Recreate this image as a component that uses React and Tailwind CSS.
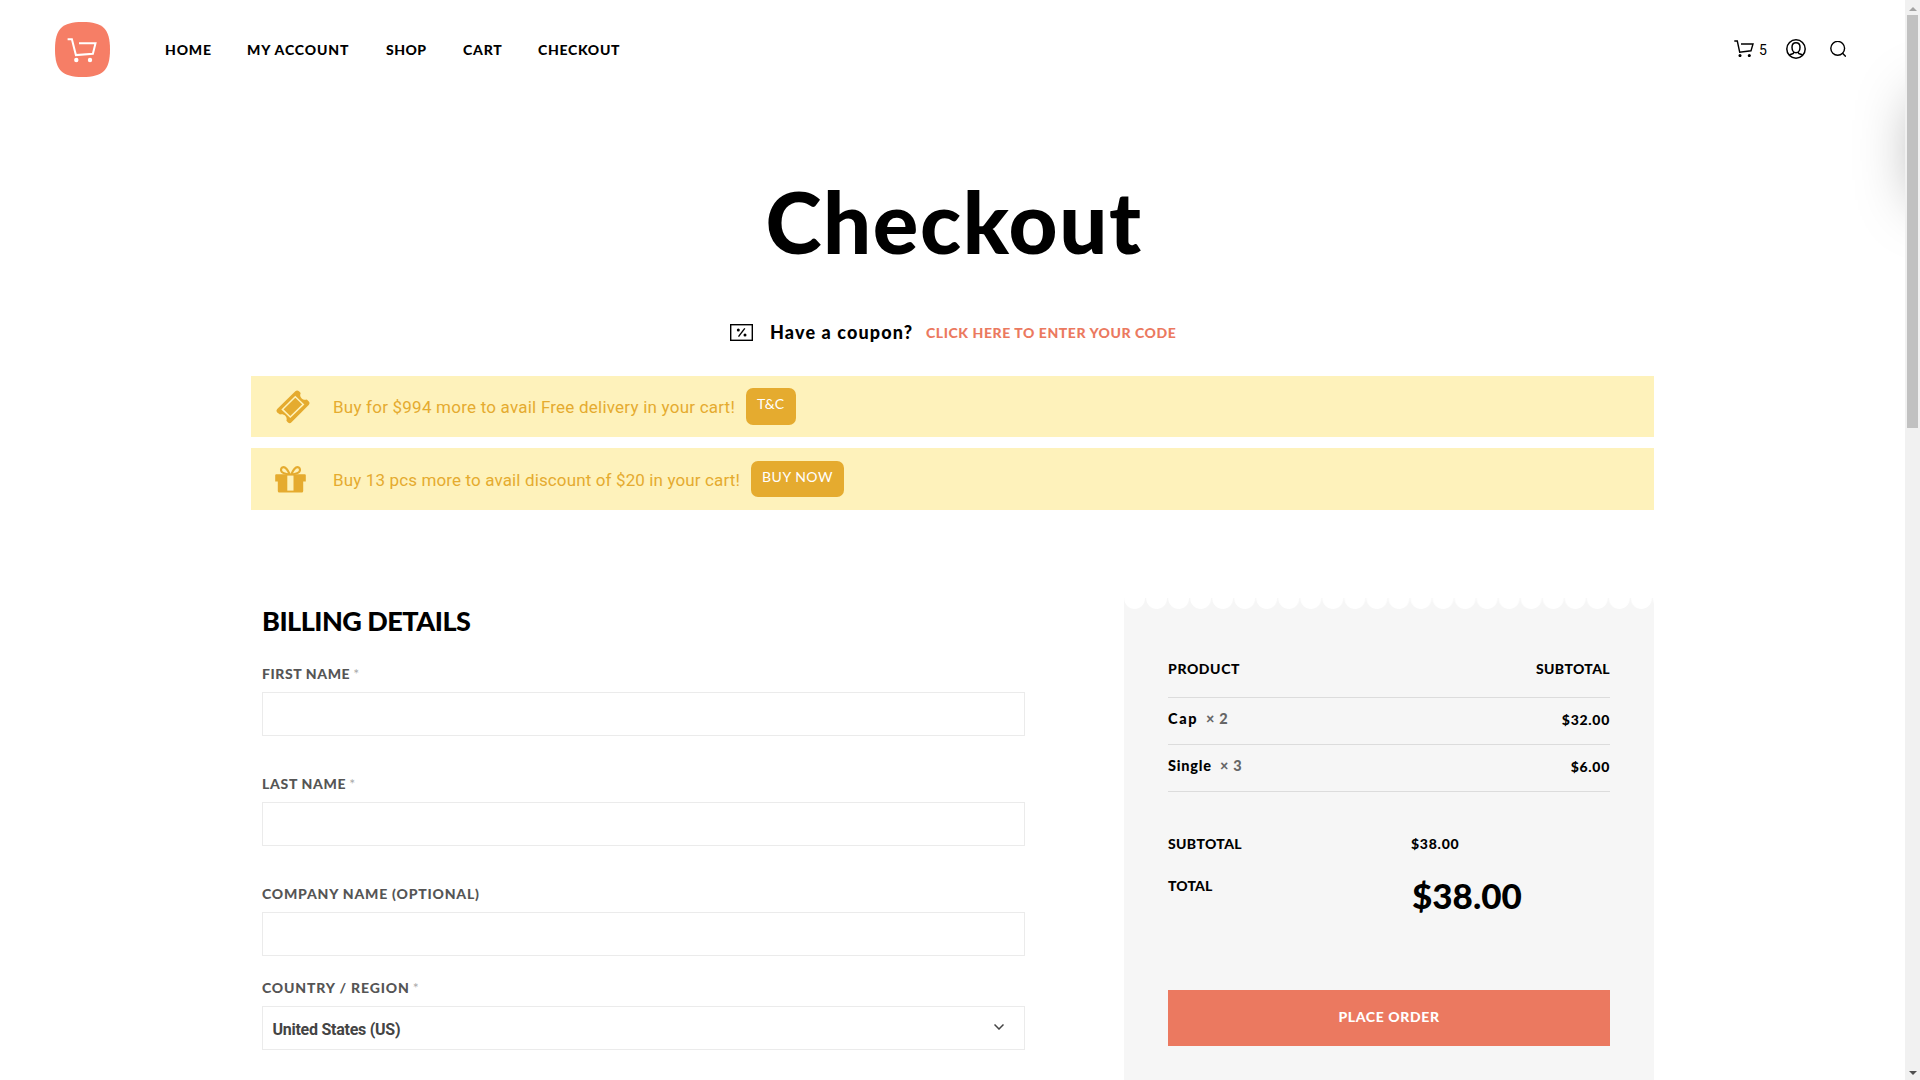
const NAV = [
  { label: "HOME", cls: "w-[82px] tracking-[0.83px]" },
  { label: "MY ACCOUNT", cls: "w-[139px] tracking-[0.9px]" },
  { label: "SHOP", cls: "w-[77px] tracking-[0.45px]" },
  { label: "CART", cls: "w-[75px] tracking-[0.8px]" },
  { label: "CHECKOUT", cls: "tracking-[0.7px]" },
];

function CartIcon({ className }) {
  return (
    <svg viewBox="0 0 20 17" className={className} fill="none" stroke="currentColor" strokeWidth="1.4">
      <path d="M0.3 1h3l2.4 11.2L17 10.8 19 4H7" />
      <circle cx="6" cy="15.6" r="1.5" fill="currentColor" stroke="none" />
      <circle cx="15.3" cy="15.6" r="1.5" fill="currentColor" stroke="none" />
    </svg>
  );
}

function UserIcon() {
  return (
    <svg viewBox="0 0 20 20" className="h-5 w-5" fill="none" stroke="#000" strokeWidth="1.5">
      <circle cx="10" cy="10" r="9.2" />
      <path d="M10 3.8c2.5 0 4 1.9 4 4.4 0 3-1.6 5.6-4 5.6s-4-2.6-4-5.6c0-2.5 1.5-4.4 4-4.4z" />
      <path d="M3.3 16.2c1-1 2.6-1.3 4-1.7l.6-1.6M16.7 16.2c-1-1-2.6-1.3-4-1.7l-.6-1.6" />
    </svg>
  );
}

function SearchIcon() {
  return (
    <svg viewBox="0 0 16 16" className="h-4 w-4" fill="none" stroke="#000" strokeWidth="1.4">
      <circle cx="7.7" cy="7.3" r="6.9" />
      <path d="M12.3 12l3.5 3.6" />
    </svg>
  );
}

function CouponIcon() {
  return (
    <svg viewBox="0 0 23 17" className="h-[17px] w-[23px]" fill="none" stroke="#000" strokeWidth="1.4">
      <rect x="0.7" y="0.7" width="21.6" height="15.6" />
      <path d="M14.8 4.3L8.5 12.6" />
      <circle cx="8.3" cy="6" r="1.5" fill="#000" stroke="none" />
      <circle cx="15" cy="11" r="1.5" fill="#000" stroke="none" />
    </svg>
  );
}

function TicketIcon() {
  return (
    <svg viewBox="0 0 34 34" className="h-[34px] w-[34px]">
      <path
        fill="#e5ab2f"
        d="M19.3 1.2Q21.2-.4 23 1.3L24.7 3C23.800 5 24 6.700 25.500 8.200S28.800 10.200 30.800 9.600L32.800 11.400Q34.300 13 32.700 14.900L15.500 32.300Q13.700 34 12 32.400L10.400 30.800C11 29 10.600 27.200 9.200 25.800S5.800 23.900 4 24.600L1.200 22.400Q-.3 20.800 1.200 19z"
      />
      <path d="M19.3 6.8L27.3 14.4 14.3 27 6.4 19.4z" fill="none" stroke="#fef2bb" strokeWidth="1.5" />
    </svg>
  );
}

function GiftIcon() {
  return (
    <svg viewBox="0 0 31 27" className="h-[27px] w-[31px]">
      <g fill="none" stroke="#e5ab2f" strokeWidth="2.2">
        <path d="M14.8 8.5C13 4.500 11.200 1.200 8.600 1.200 6.400 1.200 5.800 3 6.100 4.600 6.500 6.800 9 7.800 14.800 8.500z" />
        <path d="M16.2 8.5C18 4.500 19.800 1.200 22.400 1.200c2.200 0 2.800 1.800 2.500 3.400C24.500 6.800 22 7.800 16.200 8.500z" />
      </g>
      <path fill="#e5ab2f" d="M1.2 8.3h28.6q1 0 1 1v6.2h-2.6V25q0 1.5-1.5 1.5H4.3Q2.8 26.5 2.8 25v-9.5H.2V9.3q0-1 1-1z" />
      <path fill="#fef2bb" d="M12.3 9.6h6.2v15h-6.2z" />
    </svg>
  );
}

function Banner({ icon, iconCls, text, textCls, button, buttonCls, cls }) {
  return (
    <div className={`flex items-center bg-[#fef2bb] ${cls}`}>
      <div className={`flex w-[82px] shrink-0 items-center ${iconCls}`}>{icon}</div>
      <span className={`whitespace-nowrap font-[Roboto,sans-serif] text-[17px] leading-5 text-[#e5ab2f] ${textCls}`}>{text}</span>
      <button className={`flex justify-center rounded-[7px] bg-[#e5ab2f] pt-2 text-sm leading-4 text-white ${buttonCls}`}>{button}</button>
    </div>
  );
}

function Field({ label, labelCls, required, cls, children }) {
  return (
    <div className={cls}>
      <label className="flex h-4 items-center whitespace-nowrap text-sm leading-4 text-[#555]">
        <span className={`font-black ${labelCls}`}>{label}</span>
        {required && <span className="ml-[3px] text-sm leading-4 text-[#aaa]">*</span>}
      </label>
      <div className="mt-2.5 flex h-11 w-[763px] items-center justify-between border border-[#ebebeb] bg-white">{children}</div>
    </div>
  );
}

function ItemRow({ name, nameCls, qty, price }) {
  return (
    <div className="flex h-[47px] justify-between border-b border-[#dcdcdc] pt-[13px] leading-4">
      <div className="flex text-[14.5px]">
        <span className={nameCls}>{name}</span>
        <span className="ml-2 tracking-[0.7px] text-[#666]">× {qty}</span>
      </div>
      <span className="pt-px tracking-[0.7px]">{price}</span>
    </div>
  );
}

export default function App() {
  return (
    <div className="flex h-[1080px] w-[1920px] overflow-hidden bg-white font-[Lato,sans-serif] text-black">
      <div className="relative w-[1905px] overflow-hidden">
        <div className="absolute top-[100px] left-[1918px] h-[100px] w-[200px] shadow-[0_0_60px_0_rgba(0,0,0,0.35)]" />
        <header className="flex h-[99px] items-center pl-[55px]">
          <div className="flex h-[55px] w-[55px] items-center justify-center">
            <svg viewBox="0 0 55 55" className="h-[55px] w-[55px]">
              <path fill="#f67e66" d="M27.5 0C48 0 55 7 55 27.500S48 55 27.500 55 0 48 0 27.500 7 0 27.500 0z" />
              <path d="M12.6 17.3h4.3l4 15.8 17-1.4 2.6-10.4H24" fill="none" stroke="#fff" strokeWidth="2" />
              <circle cx="21.3" cy="38" r="2.2" fill="#fff" />
              <circle cx="35" cy="38" r="2.2" fill="#fff" />
            </svg>
          </div>
          <nav className="ml-[55px] flex text-sm leading-4 font-black whitespace-nowrap">
            {NAV.map((n) => (
              <a key={n.label} className={n.cls}>{n.label}</a>
            ))}
          </nav>
          <div className="mr-[59px] mb-[2px] ml-auto flex items-center">
            <CartIcon className="h-[17px] w-5" />
            <span className="mt-0.5 ml-[5px] w-[27px] font-[Roboto,sans-serif] text-sm">5</span>
            <UserIcon />
            <span className="ml-6"><SearchIcon /></span>
          </div>
        </header>

        <h1 className="mt-20 pl-[3px] text-center text-[85px] leading-[85px] font-black tracking-[1.59px]">Checkout</h1>

        <div className="mt-[58px] flex h-5 items-center pl-[730px] whitespace-nowrap">
          <CouponIcon />
          <span className="ml-[17px] w-[156px] text-[18px] leading-5 font-black tracking-[1.13px]">Have a coupon?</span>
          <a className="pt-0.5 text-sm leading-4 font-black tracking-[0.57px] text-[#eb7960]">CLICK HERE TO ENTER YOUR CODE</a>
        </div>

        <div className="mt-[34px] ml-[251px] flex w-[1403px] flex-col gap-[11px]">
          <Banner
            cls="h-[61px]"
            icon={<TicketIcon />}
            iconCls="pl-[25px]"
            text="Buy for $994 more to avail Free delivery in your cart!"
            textCls="w-[413px] tracking-[0.22px]"
            button="T&C"
            buttonCls="h-[37px] w-[50px] pr-px tracking-normal"
          />
          <Banner
            cls="h-[62px]"
            icon={<GiftIcon />}
            iconCls="pl-6"
            text="Buy 13 pcs more to avail discount of $20 in your cart!"
            textCls="w-[418px] pt-0.5 tracking-[0.13px]"
            button="BUY NOW"
            buttonCls="h-[36px] w-[93px] tracking-[0.5px]"
          />
        </div>

        <main className="flex pl-[262px]">
          <section className="w-[862px] pt-[95px]">
            <h2 className="mb-[29px] text-[27px] leading-8 font-black tracking-[-0.5px]">BILLING DETAILS</h2>
            <Field label="FIRST NAME" labelCls="tracking-[0.59px]" required />
            <Field label="LAST NAME" labelCls="tracking-[0.68px]" required cls="mt-10" />
            <Field label="COMPANY NAME (OPTIONAL)" labelCls="tracking-[0.8px]" cls="mt-10" />
            <Field label="COUNTRY / REGION" labelCls="tracking-[0.85px]" required cls="mt-6">
              <span className="pt-1 pl-[9.5px] font-[Roboto,sans-serif] text-base font-bold tracking-[-0.26px] text-[#444]">United States (US)</span>
              <svg viewBox="0 0 10 6" className="mr-5 mb-0.5 h-1.5 w-2.5" fill="none" stroke="#444" strokeWidth="1.5">
                <path d="M0.5 0.5L5 5 9.5 0.5" />
              </svg>
            </Field>
          </section>

          <aside className="mt-[88px] h-[520px] w-[530px] bg-[#f6f6f6] bg-[radial-gradient(circle_at_10.6px_0.5px,#fff_10px,#f6f6f6_10.8px)] bg-[length:22.04px_12px] bg-repeat-x px-11 text-sm font-black">
            <div className="flex h-[100px] justify-between border-b border-[#dcdcdc] pt-[63px] leading-4">
              <span className="tracking-[0.6px]">PRODUCT</span>
              <span className="tracking-[0.35px]">SUBTOTAL</span>
            </div>
            <ItemRow name="Cap" nameCls="tracking-[1.6px]" qty={2} price="$32.00" />
            <ItemRow name="Single" nameCls="tracking-[0.8px]" qty={3} price="$6.00" />
            <div className="mt-11 flex leading-4">
              <span className="w-[243px] tracking-[0.35px]">SUBTOTAL</span>
              <span className="tracking-[0.74px]">$38.00</span>
            </div>
            <div className="mt-[26px] flex">
              <span className="w-[244px] leading-4 tracking-[0.12px]">TOTAL</span>
              <span className="text-[35px] leading-[35px]">$38.00</span>
            </div>
            <button className="mt-[77px] flex h-14 w-[442px] items-center justify-center bg-[#eb7960] pb-0.5 leading-4 tracking-[0.62px] text-white">PLACE ORDER</button>
          </aside>
        </main>
      </div>

      <div className="flex w-[15px] flex-col items-center bg-[#f1f1f1]">
        <div className="flex h-[15px] items-center">
          <svg viewBox="0 0 8 4" className="mt-0.5 h-1 w-2"><path d="M0 4L4 0l4 4z" fill="#a3a3a3" /></svg>
        </div>
        <div className="h-[413px] w-[11px] bg-[#c1c1c1]" />
        <div className="mt-auto flex h-[15px] items-center">
          <svg viewBox="0 0 8 4" className="h-1 w-2"><path d="M0 0l4 4 4-4z" fill="#505050" /></svg>
        </div>
      </div>
    </div>
  );
}
